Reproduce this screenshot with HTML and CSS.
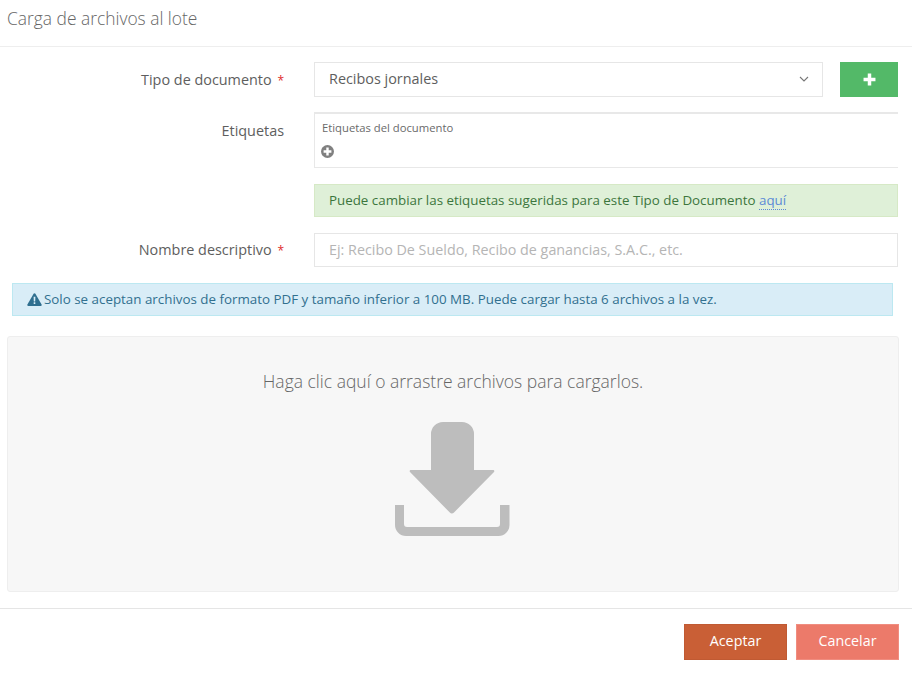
FILE: index.html
```html
<!DOCTYPE html>
<html lang="es">
<head>
<meta charset="utf-8">
<title>Carga de archivos al lote</title>
<link rel="stylesheet" href="styles.css">
</head>
<body>
<div class="modal">
  <header class="modal-header">Carga de archivos al lote</header>
  <main class="modal-body">
    <div class="form-grid">
      <label class="field-label">Tipo de documento <span class="req">*</span></label>
      <div class="select-row">
        <div class="select">
          <span>Recibos jornales</span>
          <svg class="chevron" width="10" height="6" viewBox="0 0 10 6"><path d="M1 1l4 4 4-4" fill="none" stroke="#777" stroke-width="1.100"/></svg>
        </div>
        <button class="btn-add" type="button" aria-label="Agregar">
          <svg width="13" height="13" viewBox="0 0 12 12"><path d="M4.400 0.500h3.200v3.900h3.900v3.200H7.600v3.900H4.400V7.600H0.500V4.400h3.900z" fill="#fff"/></svg>
        </button>
      </div>
      <label class="field-label label-tags">Etiquetas</label>
      <div class="tags">
        <div class="tags-title">Etiquetas del documento</div>
        <svg class="tags-add" width="13" height="13" viewBox="0 0 13 13"><circle cx="6.500" cy="6.500" r="6.500" fill="#808080"/><path d="M5.300 2.600h2.400v2.700h2.700v2.400H7.700v2.700H5.300V7.700H2.600V5.300h2.700z" fill="#fff"/></svg>
      </div>
      <div class="alert-green">Puede cambiar las etiquetas sugeridas para este Tipo de Documento <a class="link" href="#">aquí</a></div>
      <label class="field-label label-name">Nombre descriptivo <span class="req">*</span></label>
      <input class="input" type="text" placeholder="Ej: Recibo De Sueldo, Recibo de ganancias, S.A.C., etc.">
    </div>
    <div class="alert-blue">
      <svg width="15" height="13" viewBox="0 0 15 13"><path d="M7.500 0.300c.4 0 .7.2.9.5l6.200 10.600c.4.7-.1 1.500-.9 1.500H1.300c-.8 0-1.300-.8-.9-1.500L6.600.8c.2-.3.500-.5.9-.5z" fill="#2f6f8f"/><path d="M6.600 3.800h1.800l-.2 4.600H6.800zM6.700 9.300h1.600v1.600H6.700z" fill="#d9edf7"/></svg>
      <span class="alert-blue-text">Solo se aceptan archivos de formato PDF y tamaño inferior a 100 MB. Puede cargar hasta 6 archivos a la vez.</span>
    </div>
    <div class="dropzone">
      <p class="drop-text">Haga clic aquí o arrastre archivos para cargarlos.</p>
      <svg class="drop-icon" width="116" height="116" viewBox="0 0 116 116">
        <path d="M37 14A12 12 0 0 1 49 2H68a12 12 0 0 1 12 12v36h19c1.200 0 1.800 1 1 2L60 92.500c-1.200 1.300-3 1.300-4.200 0L16 52c-.8-1-.2-2 1-2h20z" fill="#bdbdbd"/>
        <path d="M1 85h9v19a3 3 0 0 0 3 3h90a3 3 0 0 0 3-3V85h9.500v20a11 11 0 0 1-11 11H12a11 11 0 0 1-11-11z" fill="#bdbdbd"/>
      </svg>
    </div>
  </main>
  <footer class="modal-footer">
    <button class="btn btn-accept" type="button">Aceptar</button>
    <button class="btn btn-cancel" type="button">Cancelar</button>
  </footer>
</div>
</body>
</html>
```

FILE: styles.css
```css
* { box-sizing: border-box; }
html, body { margin: 0; padding: 0; background: #fff; }
body { font-family: "Open Sans", "Liberation Sans", sans-serif; font-size: 13px; color: #555; }
.modal { width: 912px; height: 675px; overflow: hidden; }
.modal-header {
  height: 47px;
  padding: 6px 7px 0;
  font-size: 17.4px;
  line-height: 24px;
  font-weight: 300;
  color: #666;
  border-bottom: 1px solid #eee;
}
.modal-body { padding: 15px 13px 16px 7px; }
.form-grid {
  display: grid;
  grid-template-columns: 277px 584px;
  column-gap: 30px;
  row-gap: 15px;
  margin-right: 1px;
}
.field-label {
  justify-self: end;
  align-self: center;
  padding-top: 1px;
  font-size: 14.4px;
  line-height: 20px;
  color: #5e5e5e;
}
.req { color: #e02b2b; font-size: 12px; margin-left: 2px; }
.label-tags { align-self: start; padding-top: 9px; }
.select-row { display: flex; gap: 17px; }
.select {
  flex: 1;
  height: 35px;
  border: 1px solid #e6e6e6;
  padding: 0 13px 2px 14px;
  display: flex;
  align-items: center;
  justify-content: space-between;
  font-size: 14.4px;
  color: #5e5e5e;
}
.btn-add {
  width: 58px;
  height: 35px;
  padding: 0;
  border: 0;
  background: #53b968;
  display: flex;
  align-items: center;
  justify-content: center;
}
.tags {
  height: 56px;
  border: 1px solid #e8e8e8;
  border-top-width: 2px;
  border-right: 0;
  padding: 7px 7px 0;
}
.tags-title { font-size: 11.27px; line-height: 14px; color: #6a6a6a; }
.tags-add { display: block; margin: 10px 0 0 -1px; }
.alert-green {
  grid-column: 2;
  height: 33px;
  margin-top: 1px;
  line-height: 31px;
  padding: 0 14px;
  background: #dff0d8;
  border: 1px solid #d6e9c6;
  color: #3c763d;
  font-size: 13.35px;
  white-space: nowrap;
}
.link { color: #5b8ad6; text-decoration: none; border-bottom: 1px dotted #5b8ad6; }
.label-name { margin-top: 1px; padding-top: 0; }
.input {
  height: 34px;
  width: 100%;
  margin-top: 1px;
  border: 1px solid #e6e6e6;
  padding: 0 14px 2px;
  font: inherit;
  font-size: 14.32px;
  outline: none;
}
.input::placeholder { color: #b5b5b5; opacity: 1; }
.alert-blue {
  margin: 16px 6px 0 5px;
  height: 33px;
  padding: 0 14px;
  display: flex;
  align-items: center;
  gap: 2px;
  background: #d9edf7;
  border: 1px solid #bce8f1;
  color: #31708f;
  font-size: 13.37px;
  white-space: nowrap;
}
.alert-blue-text { margin-bottom: 2px; }
.dropzone {
  margin-top: 20px;
  height: 256px;
  width: 892px;
  background: #f7f7f7;
  border: 1px solid #eee;
  border-radius: 3px;
  display: flex;
  flex-direction: column;
  align-items: center;
}
.drop-text {
  margin: 32px 0 0;
  font-size: 17.5px;
  line-height: 24px;
  font-weight: 300;
  color: #666;
}
.drop-icon { margin-top: 27px; margin-right: 2px; }
.modal-footer {
  border-top: 1px solid #e5e5e5;
  padding: 15px 13px 0 0;
  display: flex;
  justify-content: flex-end;
  gap: 9px;
}
.btn {
  width: 103px;
  height: 36px;
  padding: 0 0 4px;
  border: 1px solid transparent;
  color: #fff;
  font-family: inherit;
  font-size: 14.3px;
}
.btn-accept { background: #c95f36; border-color: #c05a33; }
.btn-cancel { background: #ec7a6a; border-color: #f08d80; }
```
